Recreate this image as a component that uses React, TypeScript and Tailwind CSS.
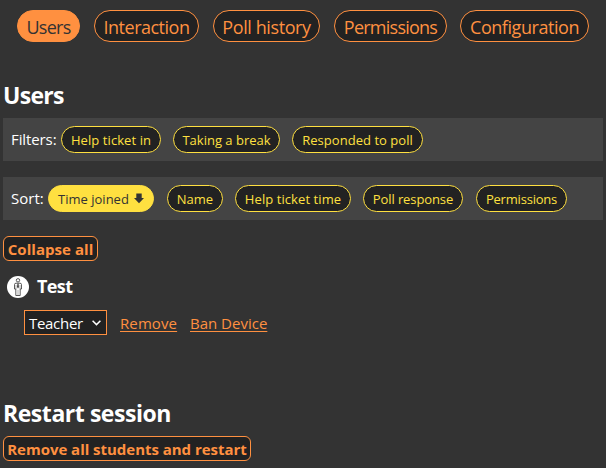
import { ReactNode } from "react";

function Tab({ children, className }: { children: ReactNode; className: string }) {
  return (
    <button className={`flex h-8 shrink-0 items-center justify-center whitespace-nowrap rounded-full border border-[#ff9040] pt-px text-[18px] leading-none ${className}`}>
      <span>{children}</span>
    </button>
  );
}

function Pill({ children, className }: { children: ReactNode; className: string }) {
  return (
    <button className={`flex h-[27px] shrink-0 items-center justify-center whitespace-nowrap rounded-full border border-[#ffe040] pt-[2px] text-[13px] leading-none ${className}`}>
      {children}
    </button>
  );
}

function BarButton({ children, className }: { children: ReactNode; className: string }) {
  return (
    <button className={`flex h-[25px] items-center justify-center whitespace-nowrap rounded-[6px] border border-[#ff9040] bg-[#222] pt-[2px] text-[15px] font-bold leading-none text-[#ff9040] ${className}`}>
      {children}
    </button>
  );
}

const idleTab = "bg-[#222] text-[#ff9040]";
const idlePill = "bg-[#222] text-[#ffe040]";

export default function App() {
  return (
    <div className="h-[468px] w-[606px] overflow-hidden bg-[#333] px-[3px] pt-[10px] font-['Open_Sans','Noto_Sans',sans-serif] text-white">
      <nav className="flex pl-[14px]">
        <Tab className="w-[63px] bg-[#ff9040] tracking-[-0.7px] text-[#333]">Users</Tab>
        <Tab className={`ml-[14px] w-[105px] tracking-[-0.5px] ${idleTab}`}>Interaction</Tab>
        <Tab className={`ml-[14px] w-[107px] tracking-[-0.4px] ${idleTab}`}>Poll history</Tab>
        <Tab className={`ml-[14px] w-[113px] tracking-[-0.75px] ${idleTab}`}>Permissions</Tab>
        <Tab className={`ml-[13px] w-[129px] tracking-[-0.45px] ${idleTab}`}>Configuration</Tab>
      </nav>

      <h1 className="mt-[37px] h-[39px] whitespace-nowrap text-[23px] font-bold leading-[32px] tracking-[-0.7px]">Users</h1>

      <section className="flex h-[43px] items-center bg-[#444] pl-2">
        <span className="w-[50px] whitespace-nowrap text-[15px] tracking-[-0.1px]">Filters:</span>
        <Pill className={`w-[100px] tracking-[0.08px] ${idlePill}`}>Help ticket in</Pill>
        <Pill className={`ml-3 w-[107px] ${idlePill}`}>Taking a break</Pill>
        <Pill className={`ml-3 w-[131px] tracking-[0.04px] ${idlePill}`}>Responded to poll</Pill>
      </section>

      <section className="mt-4 flex h-[43px] items-center bg-[#444] pl-2">
        <span className="w-[37px] whitespace-nowrap text-[15px]">Sort:</span>
        <Pill className="w-[106px] bg-[#ffe040] text-[#333]">
          Time joined
          <svg className="mb-[2px] ml-[5px] h-[11px] w-[10px]" viewBox="0 0 10 11" fill="currentColor">
            <path d="M2.3 0.5H7.7V5H10L5 10.2L0 5H2.3Z" />
          </svg>
        </Pill>
        <Pill className={`ml-[13px] w-[56px] ${idlePill}`}>Name</Pill>
        <Pill className={`ml-3 w-[116px] tracking-[0.08px] ${idlePill}`}>Help ticket time</Pill>
        <Pill className={`ml-3 w-[100px] tracking-[-0.1px] ${idlePill}`}>Poll response</Pill>
        <Pill className={`ml-[13px] w-[91px] tracking-[-0.2px] ${idlePill}`}>Permissions</Pill>
      </section>

      <BarButton className="mt-4 w-[95px] tracking-[0.05px]">Collapse all</BarButton>

      <div className="mt-[14px] flex h-6 items-center pl-1">
        <svg className="h-[22px] w-[22px]" viewBox="0 0 22 22" fill="none">
          <circle cx="11" cy="11" r="11" fill="#fff" />
          <g stroke="#333" strokeWidth="0.8">
            <circle cx="11" cy="4.3" r="1.7" />
            <path d="M9 7.2H13Q14.5 7.2 14.5 8.6V13H13.2V19.5H8.8V13H7.5V8.6Q7.5 7.2 9 7.2Z" />
            <path d="M9 9V13M13 9V13M11 14V19.5" strokeWidth="0.4" />
          </g>
          <path d="M10.5 7.5H11.5L11.9 11L11 12.5L10.1 11Z" fill="#333" />
        </svg>
        <h2 className="mb-[2px] ml-[8px] whitespace-nowrap text-[18px] font-bold leading-6 tracking-[-0.6px]">Test</h2>
      </div>

      <div className="mt-[11px] flex h-[25px] items-center pl-[21px] text-[15px]">
        <button className="flex h-[25px] w-[83px] items-center justify-between whitespace-nowrap border border-[#ff9040] bg-[#222] pl-1 pr-[5px] tracking-[-0.3px]">
          <span className="pt-[2px]">Teacher</span>
          <svg className="h-[6px] w-[9px]" viewBox="0 0 9 6" fill="none" stroke="currentColor" strokeWidth="1.5">
            <path d="M0.6 0.7L4.5 4.6L8.4 0.7" />
          </svg>
        </button>
        <a className="ml-[13px] w-[57px] whitespace-nowrap pt-[2px] tracking-[0.1px] text-[#ff9040] underline underline-offset-2">Remove</a>
        <a className="ml-[13px] whitespace-nowrap pt-[2px] text-[#ff9040] underline underline-offset-2">Ban Device</a>
      </div>

      <h1 className="mt-[62px] h-[39px] whitespace-nowrap text-[23px] font-bold leading-[32px] tracking-[-0.45px]">Restart session</h1>
      <BarButton className="w-[248px] tracking-[-0.03px]">Remove all students and restart</BarButton>
    </div>
  );
}
